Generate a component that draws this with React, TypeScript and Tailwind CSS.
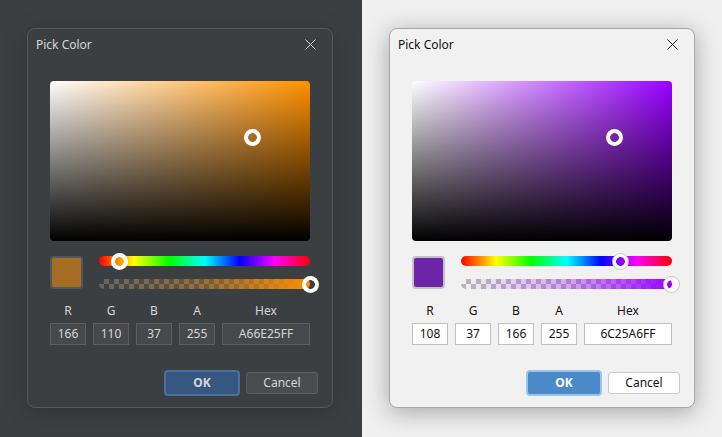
const FONT = "font-['Noto_Sans','Open_Sans',sans-serif]";

type Picker = {
  dark: boolean;
  hue: string;
  swatch: string;
  hueLeft: string;
  alphaLeft: string;
  rgba: string[];
  hex: string;
};

// the hole in the middle is see-through, so the bar or gradient shows in it
function Ring({ className }: { className: string }) {
  return (
    <div
      className={`absolute h-[17px] w-[17px] rounded-full bg-[radial-gradient(circle,transparent_4px,#fff_4.7px)] ${className}`}
    />
  );
}

function ColorPicker({ dark, hue, swatch, hueLeft, alphaLeft, rgba, hex }: Picker) {
  const fieldClass = dark
    ? "border-[#5c5f62] bg-[#46494c] text-[#d6d6d6]"
    : "border-[#c0c0c0] bg-white text-[#111]";
  const labelClass = dark ? "text-[#d6d6d6]" : "text-[#111]";
  const barRing = dark ? "top-[-3px]" : "top-[-3px] border border-[#c8c8c8]";

  return (
    <div
      className={`flex h-[380px] w-[306px] flex-col rounded-[8px] border ${
        dark
          ? "border-[#56595c] bg-[#3c3f42] shadow-[0_4px_24px_rgba(0,0,0,0.2)]"
          : "border-[#a8a8a8] bg-[#f1f1f1] shadow-[0_4px_24px_rgba(0,0,0,0.32)]"
      }`}
    >
      <div className={`flex h-[52px] items-start justify-between pl-2 pr-4 pt-[7px] text-[12px] ${labelClass}`}>
        <span>Pick Color</span>
        <svg width="11" height="11" viewBox="0 0 11 11" className="mt-[3px]" fill="none">
          <path d="M0.5 0.5 L10.5 10.5 M10.5 0.5 L0.5 10.5" stroke={dark ? "#d6d6d6" : "#222"} strokeWidth="1" />
        </svg>
      </div>

      <div className="flex flex-col px-[22px]">
        <div
          className="relative h-[160px] w-[260px] rounded-[4px]"
          style={{
            backgroundImage: `linear-gradient(to top, #000, transparent), linear-gradient(to right, #fff, ${hue})`,
          }}
        >
          <Ring className="left-[194px] top-[48px]" />
        </div>

        <div className="mt-[15px] flex gap-4">
          <div
            className={`h-[33px] w-[33px] shrink-0 rounded-[4px] border-2 ${dark ? "border-[#55585b]" : "border-[#c4c0c8]"}`}
            style={{ backgroundColor: swatch }}
          />
          <div className="flex w-[211px] flex-col gap-[13px]">
            <div className="relative h-[10px] rounded-[5px] bg-[linear-gradient(to_right,#f00,#ff0_16.66%,#0f0_33.33%,#0ff_50%,#00f_66.66%,#f0f_83.33%,#f00)]">
              <Ring className={`${barRing} ${hueLeft}`} />
            </div>
            <div
              className={`relative h-[10px] rounded-[5px] bg-[length:10px_10px] ${
                dark
                  ? "bg-[repeating-conic-gradient(#626466_0_25%,#3c3f42_0_50%)]"
                  : "bg-[repeating-conic-gradient(#b8b8b8_0_25%,#f1f1f1_0_50%)]"
              }`}
            >
              <div
                className="h-full rounded-[5px]"
                style={{
                  backgroundImage: `linear-gradient(to right, transparent, ${hue}4d 50%, ${hue}b3 80%, ${hue})`,
                }}
              />
              <Ring className={`${barRing} ${alphaLeft}`} />
            </div>
          </div>
        </div>

        <div className="mt-[13px] flex gap-[7px] text-[12px]">
          {["R", "G", "B", "A"].map((label, i) => (
            <div key={label} className="flex w-[36px] flex-col items-center gap-[3px]">
              <span className={`leading-[18px] ${labelClass}`}>{label}</span>
              <div className={`flex h-[22px] w-full items-center justify-center border ${fieldClass}`}>{rgba[i]}</div>
            </div>
          ))}
          <div className="flex w-[88px] flex-col items-center gap-[3px]">
            <span className={`leading-[18px] ${labelClass}`}>Hex</span>
            <div className={`flex h-[22px] w-full items-center justify-center border ${fieldClass}`}>{hex}</div>
          </div>
        </div>

        <div className="mt-[25px] mr-[-8px] flex items-center justify-end gap-[6px] text-[12px]">
          <button
            className={`flex h-[26px] w-[76px] items-center justify-center rounded-[4px] border-2 font-bold ${
              dark
                ? "border-[#4a6f9c] bg-[#365780] text-[#d6d6d6]"
                : "border-[#9cc3e8] bg-[#4a8ac8] text-white"
            }`}
          >
            OK
          </button>
          <button
            className={`flex h-[22px] w-[72px] items-center justify-center rounded-[3px] border ${
              dark
                ? "border-[#5c5f62] bg-[#4a4c4e] text-[#d6d6d6]"
                : "border-[#c8c8c8] bg-white text-[#111]"
            }`}
          >
            Cancel
          </button>
        </div>
      </div>
    </div>
  );
}

export default function App() {
  return (
    <div className={`flex h-[437px] w-[722px] overflow-hidden ${FONT}`}>
      <div className="flex w-[362px] shrink-0 bg-[#3c3f42] pl-[27px] pt-[28px]">
        <ColorPicker
          dark
          hue="#ff9000"
          swatch="#a66e25"
          hueLeft="left-[12px]"
          alphaLeft="left-[203px]"
          rgba={["166", "110", "37", "255"]}
          hex="A66E25FF"
        />
      </div>
      <div className="flex flex-1 bg-[#f0f0f0] pl-[27px] pt-[28px]">
        <ColorPicker
          dark={false}
          hue="#9900ff"
          swatch="#6c25a6"
          hueLeft="left-[151px]"
          alphaLeft="left-[202px]"
          rgba={["108", "37", "166", "255"]}
          hex="6C25A6FF"
        />
      </div>
    </div>
  );
}
